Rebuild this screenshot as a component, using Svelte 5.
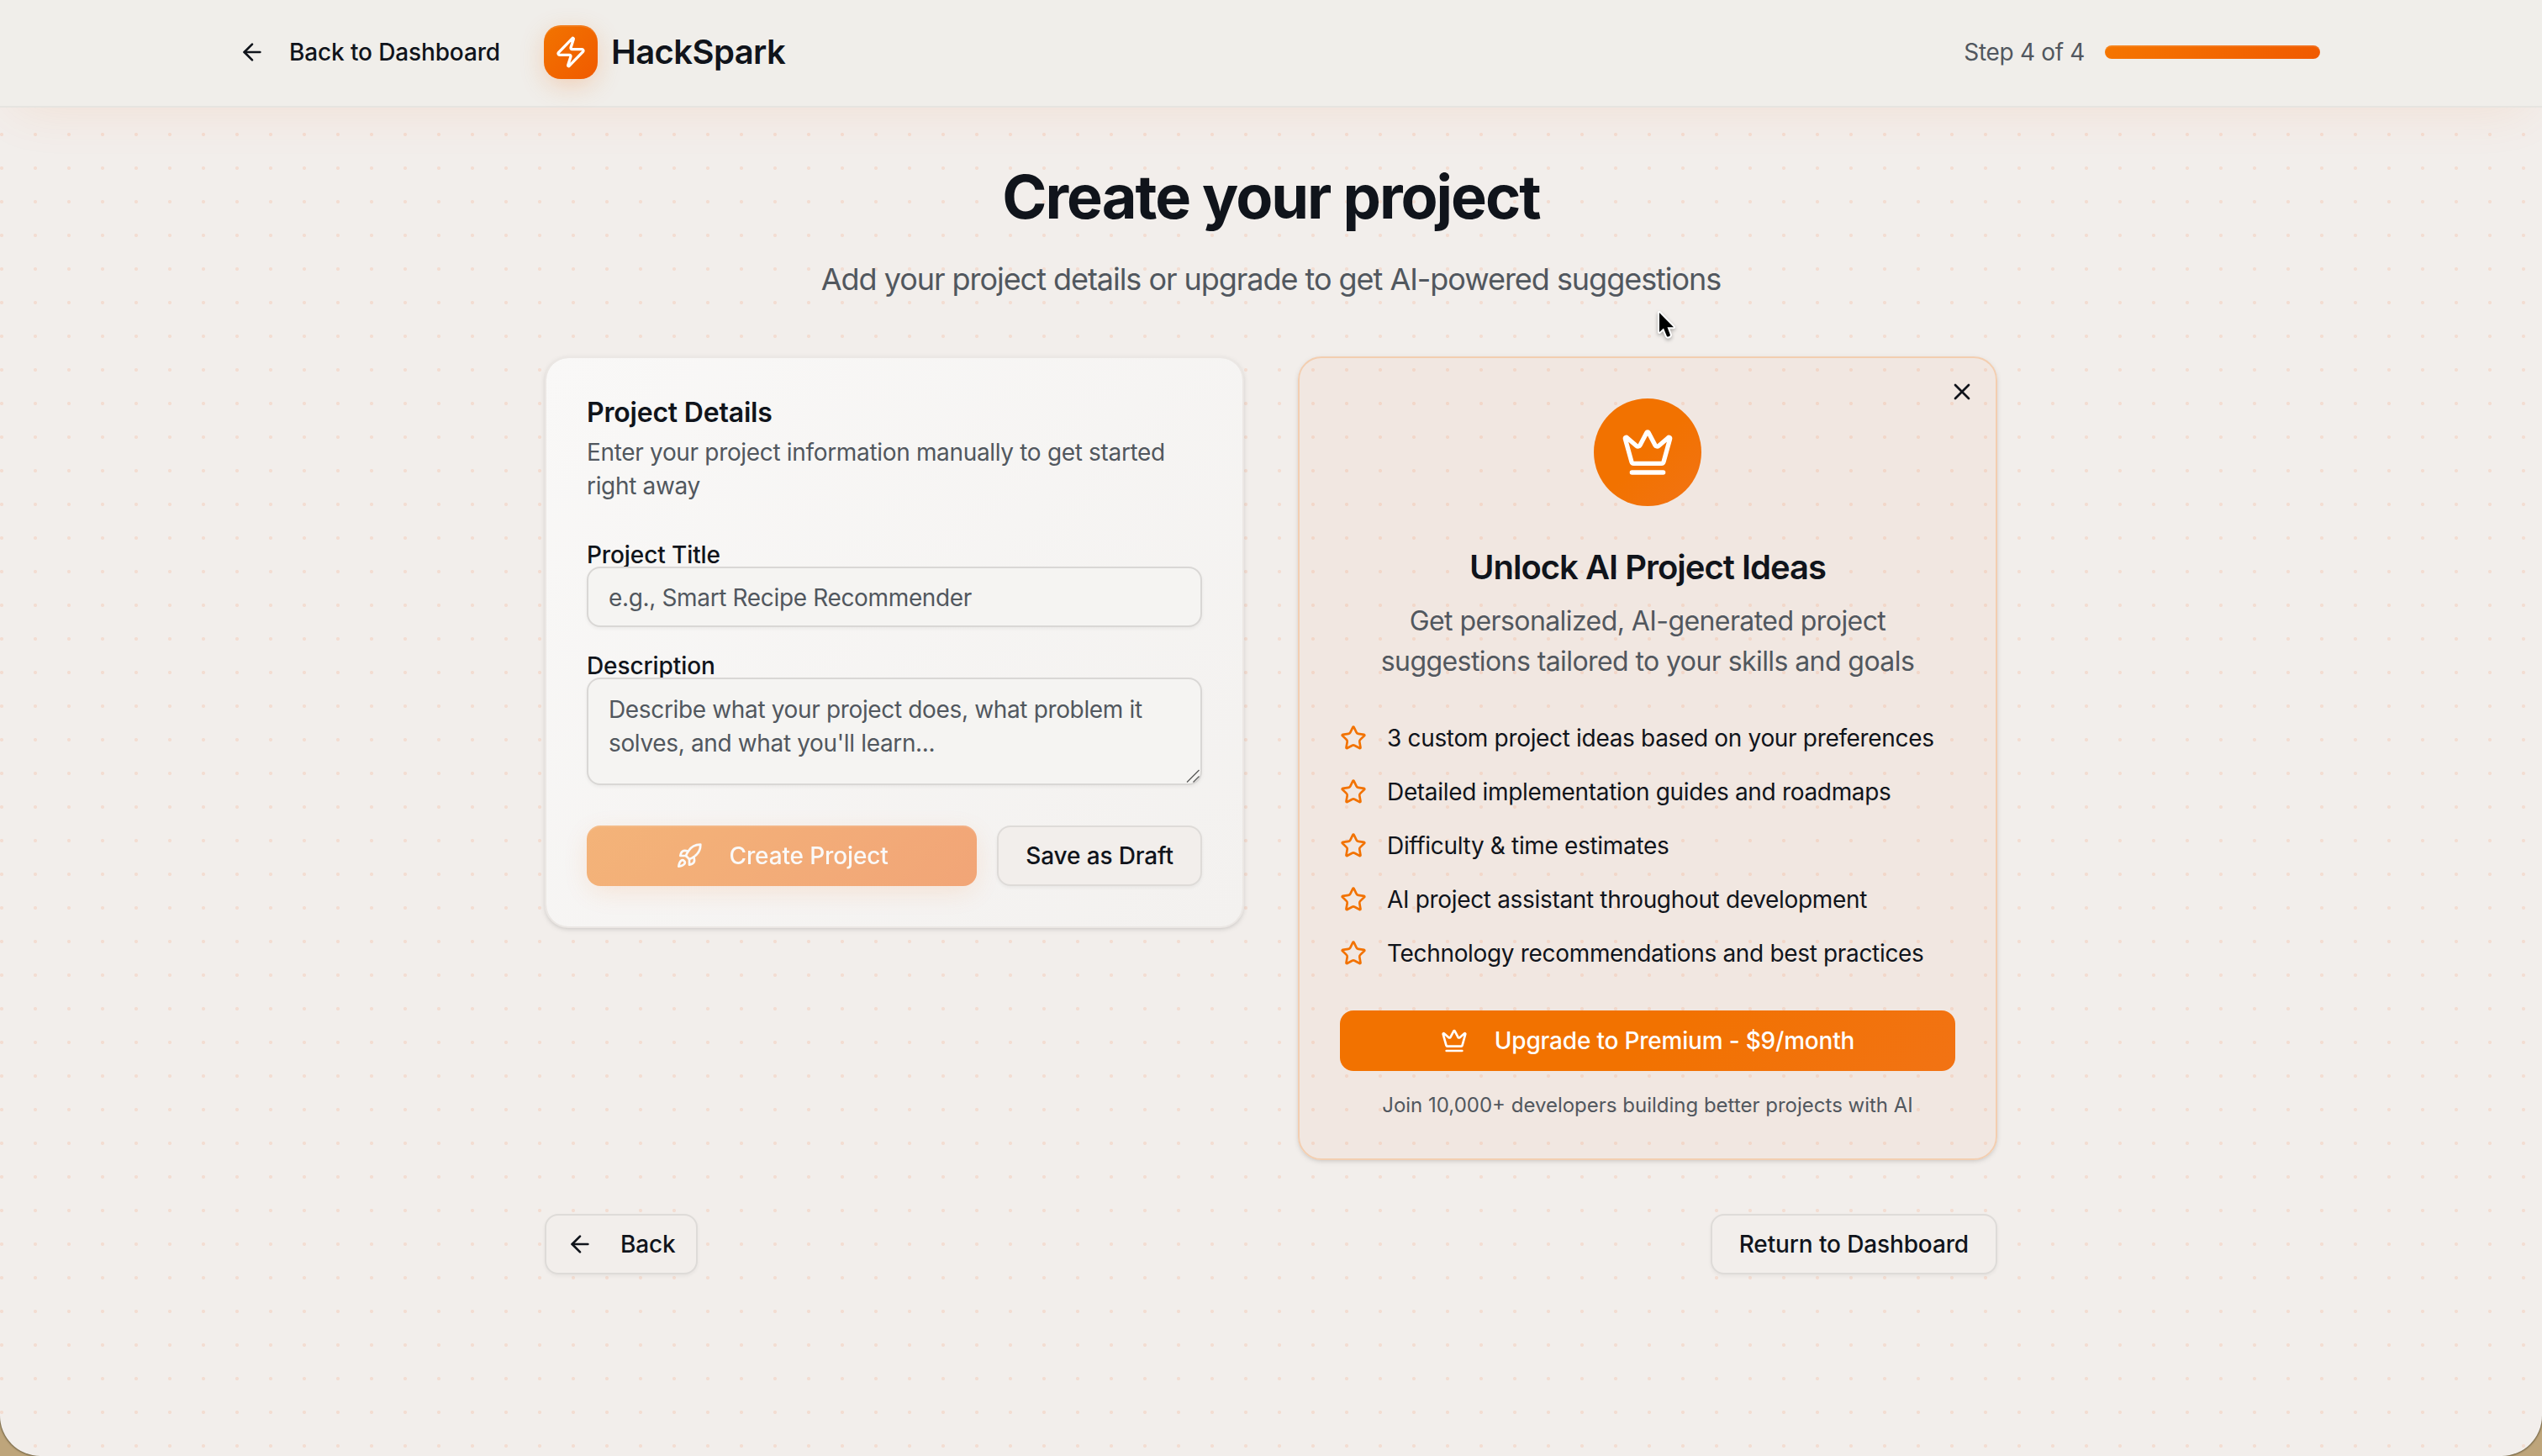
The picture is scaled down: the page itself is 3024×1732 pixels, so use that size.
<script lang="ts">
  const perks = [
    '3 custom project ideas based on your preferences',
    'Detailed implementation guides and roadmaps',
    'Difficulty & time estimates',
    'AI project assistant throughout development',
    'Technology recommendations and best practices',
  ];
</script>

{#snippet arrow()}
  <svg class="icon" viewBox="0 0 24 24"><path d="m12 19-7-7 7-7" /><path d="M19 12H5" /></svg>
{/snippet}

{#snippet crown()}
  <svg class="icon" viewBox="0 0 24 24">
    <path d="M11.562 3.266a.5.5 0 0 1 .876 0L15.39 8.87a1 1 0 0 0 1.516.294L21.183 5.5a.5.5 0 0 1 .798.519l-2.834 10.246a1 1 0 0 1-.956.734H5.81a1 1 0 0 1-.957-.734L2.02 6.02a.5.5 0 0 1 .798-.519l4.276 3.664a1 1 0 0 0 1.516-.294z" />
    <path d="M5 21h14" />
  </svg>
{/snippet}

<div class="desk">
  <div class="page">
    <header>
      <div class="bar">
        <div class="left">
          <button class="ghost">{@render arrow()}Back to Dashboard</button>
          <div class="brand">
            <div class="logo">
              <svg class="icon" viewBox="0 0 24 24"><path d="M4 14a1 1 0 0 1-.78-1.63l9.9-10.2a.5.5 0 0 1 .86.46l-1.92 6.02A1 1 0 0 0 13 10h7a1 1 0 0 1 .78 1.63l-9.9 10.2a.5.5 0 0 1-.86-.46l1.92-6.02A1 1 0 0 0 11 14z" /></svg>
            </div>
            <span>HackSpark</span>
          </div>
        </div>
        <div class="steps"><span>Step 4 of 4</span><div class="track"></div></div>
      </div>
    </header>

    <main>
      <h1>Create your project</h1>
      <p class="lead">Add your project details or upgrade to get AI-powered suggestions</p>

      <div class="columns">
        <section class="card details">
          <h2>Project Details</h2>
          <p class="hint">Enter your project information manually to get started right away</p>
          <div class="field">
            <label for="title">Project Title</label>
            <input id="title" placeholder="e.g., Smart Recipe Recommender" />
          </div>
          <div class="field">
            <label for="description">Description</label>
            <textarea id="description" placeholder="Describe what your project does, what problem it solves, and what you'll learn..."></textarea>
            <svg class="grip" viewBox="0 0 16 16"><path d="M1 15.500 15.500 1M8.500 15.500l7-7" /></svg>
          </div>
          <div class="actions">
            <button class="create" disabled>
              <svg class="icon" viewBox="0 0 24 24">
                <path d="M4.5 16.5c-1.5 1.26-2 5-2 5s3.74-.5 5-2c.71-.84.7-2.13-.09-2.91a2.18 2.18 0 0 0-2.91-.09z" />
                <path d="m12 15-3-3a22 22 0 0 1 2-3.95A12.88 12.88 0 0 1 22 2c0 2.72-.78 7.5-6 11a22.35 22.35 0 0 1-4 2z" />
                <path d="M9 12H4s.55-3.03 2-4c1.62-1.08 5 0 5 0" />
                <path d="M12 15v5s3.03-.55 4-2c1.08-1.62 0-5 0-5" />
              </svg>
              Create Project
            </button>
            <button class="outline">Save as Draft</button>
          </div>
        </section>

        <section class="card premium">
          <button class="close" aria-label="Close">
            <svg class="icon" viewBox="0 0 24 24"><path d="M18 6 6 18" /><path d="m6 6 12 12" /></svg>
          </button>
          <div class="medal">{@render crown()}</div>
          <h2>Unlock AI Project Ideas</h2>
          <p class="pitch">Get personalized, AI-generated project suggestions tailored to your skills and goals</p>
          <ul>
            {#each perks as perk}
              <li>
                <svg class="icon" viewBox="0 0 24 24"><path d="M11.525 2.295a.53.53 0 0 1 .95 0l2.31 4.679a2.123 2.123 0 0 0 1.595 1.16l5.166.756a.53.53 0 0 1 .294.904l-3.736 3.638a2.123 2.123 0 0 0-.611 1.878l.882 5.14a.53.53 0 0 1-.771.56l-4.618-2.428a2.122 2.122 0 0 0-1.973 0L6.396 21.01a.53.53 0 0 1-.77-.56l.881-5.139a2.122 2.122 0 0 0-.611-1.879L2.16 9.795a.53.53 0 0 1 .294-.906l5.165-.755a2.122 2.122 0 0 0 1.597-1.16z" /></svg>
                <span>{perk}</span>
              </li>
            {/each}
          </ul>
          <button class="upgrade">{@render crown()}Upgrade to Premium - $9/month</button>
          <p class="note">Join 10,000+ developers building better projects with AI</p>
        </section>
      </div>

      <div class="nav">
        <button class="outline back">{@render arrow()}Back</button>
        <button class="outline">Return to Dashboard</button>
      </div>
    </main>

    <svg class="cursor" viewBox="0 0 26 40">
      <path d="M4 5v23l5-4.500 3.800 9.200c.8 1.800 4.800.4 4-1.600L13.500 22.300H21z" />
    </svg>
  </div>
</div>

<style>
  :global(body) {
    margin: 0;
    overflow: hidden;
  }

  * {
    box-sizing: border-box;
  }

  h1, h2, p, ul {
    margin: 0;
    padding: 0;
  }

  .desk {
    height: 1732px;
    background: #bea57b;
  }

  .page {
    position: relative;
    height: 1732px;
    overflow: hidden;
    border-radius: 0 0 48px 48px;
    box-shadow: 0 0 2px 1px #6f6142;
    background-color: #f2eeeb;
    background-image: radial-gradient(circle at 2px 20px, #f3ddd2 1.9px, transparent 2.3px);
    background-size: 40px 40px;
    background-position: 0 -20px;
    color: #10141b;
    font-family: Inter, sans-serif;
    font-size: 28px;
    line-height: 40px;
    letter-spacing: -0.33px;
  }

  .icon {
    flex: none;
    width: 32px;
    height: 32px;
    fill: none;
    stroke: currentColor;
    stroke-width: 2;
    stroke-linecap: round;
    stroke-linejoin: round;
  }

  button {
    display: flex;
    align-items: center;
    justify-content: center;
    gap: 32px;
    height: 72px;
    padding: 0 32px;
    border: 0;
    border-radius: 16px;
    background: none;
    color: inherit;
    font: 500 28px/40px Inter, sans-serif;
    letter-spacing: -0.13px;
    white-space: nowrap;
  }

  header {
    position: relative;
    height: 128px;
    border-bottom: 2px solid #e6e4e0;
    background: #f0eeea;
    box-shadow: 0 16px 64px -16px rgba(242, 100, 20, 0.1);
  }

  .bar {
    display: flex;
    align-items: center;
    justify-content: space-between;
    width: 2560px;
    height: 124px;
    margin: 0 auto;
    padding: 0 32px;
  }

  .left, .brand, .steps {
    display: flex;
    align-items: center;
  }

  .left {
    gap: 32px;
  }

  .ghost {
    gap: 28px;
    padding: 0 20px;
  }

  .brand {
    gap: 16px;
    font-size: 40px;
    font-weight: 600;
    letter-spacing: -0.6px;
  }

  .logo {
    display: grid;
    place-items: center;
    width: 64px;
    height: 64px;
    border-radius: 20px;
    background: linear-gradient(135deg, #f27400, #f05a00);
    box-shadow: 0 8px 32px -4px rgba(242, 110, 20, 0.3), inset 0 2px 0 rgba(255, 255, 255, 0.1);
    color: #fff;
  }

  .logo .icon {
    width: 40px;
    height: 40px;
  }

  .steps {
    gap: 24px;
    color: #51575e;
  }

  .track {
    width: 256px;
    height: 16px;
    border-radius: 8px;
    background: linear-gradient(135deg, #f57600, #f05a00);
    box-shadow: inset 0 2px 0 rgba(255, 255, 255, 0.1);
  }

  main {
    width: 1728px;
    margin: 0 auto;
    padding-top: 66px;
  }

  h1 {
    font-size: 72px;
    font-weight: 700;
    line-height: 80px;
    letter-spacing: -2px;
    text-align: center;
  }

  .lead {
    margin: 30px 0 64px;
    color: #51575e;
    font-size: 36px;
    line-height: 56px;
    letter-spacing: -1.04px;
    text-align: center;
  }

  .columns {
    display: grid;
    grid-template-columns: 1fr 1fr;
    align-items: start;
    gap: 64px;
  }

  .card {
    position: relative;
    padding: 48px;
    border: 2px solid #ebe7e4;
    border-radius: 28px;
    box-shadow: 0 2px 6px rgba(0, 0, 0, 0.1), 0 2px 4px -2px rgba(0, 0, 0, 0.1);
  }

  .details {
    background: linear-gradient(135deg, #f9f8f7, #f3f1ef) padding-box, #ebe7e4 border-box;
  }

  .details h2 {
    padding-top: 1px;
    font-size: 32px;
    font-weight: 600;
    line-height: 32px;
    letter-spacing: -0.2px;
  }

  .hint {
    margin: 11px 0 48px;
    color: #51575e;
  }

  .field {
    position: relative;
    display: flex;
    flex-direction: column;
    margin-bottom: 32px;
  }

  label {
    font-weight: 500;
    line-height: 28px;
    letter-spacing: -0.1px;
  }

  input, textarea {
    width: 100%;
    height: 72px;
    padding: 1px 24px 0;
    border: 2px solid #d9d7d5;
    border-radius: 16px;
    outline: 0;
    background: #f5f4f2;
    box-shadow: 0 2px 4px rgba(0, 0, 0, 0.05);
    font: 400 28px/40px Inter, sans-serif;
    letter-spacing: -0.35px;
  }

  textarea {
    display: block;
    height: 128px;
    padding: 16px 24px;
    overflow: hidden;
    resize: none;
  }

  .grip {
    position: absolute;
    right: 3px;
    bottom: 3px;
    width: 16px;
    height: 16px;
    fill: none;
    stroke: #5c5c5b;
    stroke-width: 1.4;
  }

  ::placeholder {
    color: #51575e;
    opacity: 1;
  }

  .actions {
    display: flex;
    gap: 24px;
    margin-top: 48px;
  }

  .create {
    flex: 1;
    background: linear-gradient(135deg, #f27400, #f05a00);
    box-shadow: 0 8px 32px -4px rgba(242, 110, 20, 0.3), inset 0 2px 0 rgba(255, 255, 255, 0.1);
    color: #fff;
    opacity: 0.5;
  }

  .outline {
    border: 2px solid #dedbd8;
    background: #f2eeeb;
    box-shadow: 0 2px 4px rgba(0, 0, 0, 0.05);
  }

  .premium {
    border-color: #f3ceb0;
    background: rgba(240, 110, 30, 0.05);
    text-align: center;
  }

  .close {
    position: absolute;
    top: 16px;
    right: 16px;
    width: 48px;
    height: 48px;
    padding: 0;
  }

  .medal {
    display: grid;
    place-items: center;
    width: 128px;
    height: 128px;
    margin: 0 auto 45px;
    border-radius: 50%;
    background: linear-gradient(135deg, #f27200 50%, #f27314);
    color: #fff;
  }

  .medal .icon {
    width: 64px;
    height: 64px;
  }

  .premium h2 {
    font-size: 40px;
    font-weight: 600;
    line-height: 56px;
    letter-spacing: -1px;
  }

  .pitch {
    margin: 12px 0 47px;
    color: #51575e;
    font-size: 32px;
    line-height: 48px;
    letter-spacing: -0.58px;
  }

  ul {
    display: grid;
    gap: 24px;
    list-style: none;
  }

  li {
    display: flex;
    align-items: center;
    gap: 24px;
  }

  li .icon {
    color: #f27200;
  }

  .upgrade {
    width: 100%;
    margin: 48px 0 24px;
    background: linear-gradient(135deg, #f27200 50%, #f27314);
    color: #fff;
    letter-spacing: -0.2px;
  }

  .note {
    padding-top: 1px;
    margin-bottom: -1px;
    color: #51575e;
    font-size: 24px;
    line-height: 32px;
    letter-spacing: 0;
  }

  .nav {
    display: flex;
    justify-content: space-between;
    margin-top: 64px;
  }

  .back {
    padding: 0 24px;
  }

  .cursor {
    position: absolute;
    top: 367px;
    left: 1970px;
    width: 26px;
    height: 40px;
    fill: #000;
    stroke: #fff;
    stroke-width: 4;
    stroke-linejoin: round;
    paint-order: stroke;
    filter: drop-shadow(0 2px 2px rgba(0, 0, 0, 0.3));
  }
</style>
